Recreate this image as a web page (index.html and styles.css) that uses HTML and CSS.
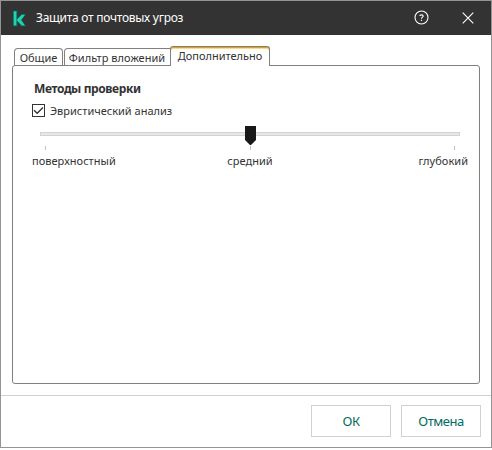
FILE: index.html
```html
<!DOCTYPE html>
<html lang="ru">
<head>
<meta charset="utf-8">
<title>Защита от почтовых угроз</title>
<link rel="stylesheet" href="styles.css">
</head>
<body>
<div class="window">
  <header class="titlebar">
    <svg class="logo" width="14" height="17" viewBox="0 0 14 17"><path class="logo-edge" d="M0 .5H4.5V8L8.5 4H13L9 9.8L13 16.3H8.4L4.5 12V16.3H0Z"/><path class="logo-face" d="M.7 1.2H3.4V15.6H.7ZM3.6 10L8.7 4.7H12L8 10L12 15.6H8.7Z"/></svg>
    <span class="title">Защита от почтовых угроз</span>
    <svg class="help" width="16" height="16" viewBox="0 0 16 16"><circle cx="7.5" cy="7.5" r="6.5"/><path d="M5.8 6.1C5.8 4.4 9.2 4.4 9.2 6.1C9.2 7.2 7.5 7.2 7.5 8.7M7.5 9.8V11"/></svg>
    <svg class="close" width="12" height="12" viewBox="0 0 12 12"><path d="M.7 .7L11.3 11.3M11.3 .7L.7 11.3"/></svg>
  </header>
  <main class="content">
    <nav class="tabs">
      <div class="tab tab-general"><span>Общие</span></div>
      <div class="tab tab-filter"><span>Фильтр вложений</span></div>
      <div class="tab active"><span>Дополнительно</span></div>
    </nav>
    <section class="panel">
      <h2>Методы проверки</h2>
      <label class="check">
        <svg width="13" height="13" viewBox="0 0 13 13"><rect x=".5" y=".5" width="12" height="12"/><path d="M2 6.2L5.2 9.3L11 3.5"/></svg>
        <span>Эвристический анализ</span>
      </label>
      <div class="slider">
        <div class="track"></div>
        <svg class="thumb" width="11" height="19" viewBox="0 0 11 19"><path d="M0 0H11V14L5.5 19.5L0 14Z"/></svg>
      </div>
      <div class="ticks"><i></i><i></i><i></i></div>
      <div class="labels"><span class="low">поверхностный</span><span class="mid">средний</span><span class="high">глубокий</span></div>
    </section>
  </main>
  <footer class="footer">
    <button class="ok">ОК</button>
    <button class="cancel">Отмена</button>
  </footer>
</div>
</body>
</html>
```
FILE: styles.css
```css
* { box-sizing: border-box; }
body {
  margin: 0;
  background: #fff;
  font: 11px/16px "Noto Sans", "Open Sans", sans-serif;
  color: #333;
}
svg { display: block; flex: none; }
.window {
  width: 492px;
  height: 448px;
  border: 1px solid #949494;
  display: flex;
  flex-direction: column;
}
.titlebar {
  height: 34px;
  flex: none;
  background: #333;
  color: #fff;
  display: flex;
  align-items: center;
  padding: 0 17px 0 12px;
}
.title { margin-left: 9px; flex: 1; font-size: 12px; letter-spacing: -.27px; white-space: nowrap; }
.logo-edge { fill: #0b6354; }
.logo-face { fill: #23d1ae; }
.help { margin-right: 32px; }
.help circle, .help path, .close path { fill: none; stroke: #fff; stroke-width: 1.1; }
.content { flex: 1; padding: 11px 11px 0; }
.tabs { display: flex; align-items: flex-end; height: 19px; padding-left: 2px; }
.tab {
  height: 17px;
  border: 1px solid #808080;
  border-bottom: 0;
  border-radius: 4px 4px 0 0;
  background: #fff;
  text-align: center;
  line-height: 17px;
  white-space: nowrap;
}
.tab-general { width: 49px; margin-right: 1px; }
.tab-filter { width: 107px; border-top-right-radius: 0; letter-spacing: .04px; padding-right: 1px; }
.tab.active {
  width: 100px;
  height: 20px;
  margin: 0 0 -1px -1px;
  border-radius: 3px 3px 0 0;
  box-shadow: inset 0 1px #e5a020, inset 0 2px #ffd98a;
  line-height: 18px;
  position: relative;
}
.panel {
  height: 319px;
  border: 1px solid #808080;
  border-radius: 3px;
  padding: 14px 11px 0 19px;
}
h2 { margin: 0 0 0 2px; font-size: 12px; line-height: 18px; font-weight: 700; letter-spacing: -.4px; white-space: nowrap; }
.check { display: flex; align-items: center; height: 17px; margin-top: 4px; }
.check rect, .check path { fill: none; stroke: #333; stroke-width: 1; }
.check path { stroke-width: 1.3; }
.check span { margin-left: 5px; white-space: nowrap; }
.slider { position: relative; height: 19px; width: 420px; margin: 7px 0 0 8px; padding-top: 6px; }
.track { height: 4px; background: #e4e8e6; border: 1px solid #d0d3d1; }
.thumb { position: absolute; left: 205px; top: 0; fill: #181818; }
.ticks { display: flex; justify-content: space-between; width: 410px; height: 5px; margin-left: 13px; padding-top: 1px; }
.ticks i { width: 1px; height: 4px; background: #c3c3c3; }
.labels { display: grid; grid-template-columns: 1fr auto 1fr; margin-top: 3px; width: 436px; letter-spacing: .04px; }
.labels .high { text-align: right; }
.footer {
  height: 52px;
  flex: none;
  border-top: 1px solid #d0d0d0;
  display: flex;
  justify-content: flex-end;
  gap: 10px;
  padding: 9px 10px 0 0;
}
button {
  width: 80px;
  height: 32px;
  padding: 0;
  border: 1px solid #d0d0d0;
  background: #fff;
  color: #006d5c;
  font: 13px/30px "Noto Sans", "Open Sans", sans-serif;
  letter-spacing: -.5px;
}
```
